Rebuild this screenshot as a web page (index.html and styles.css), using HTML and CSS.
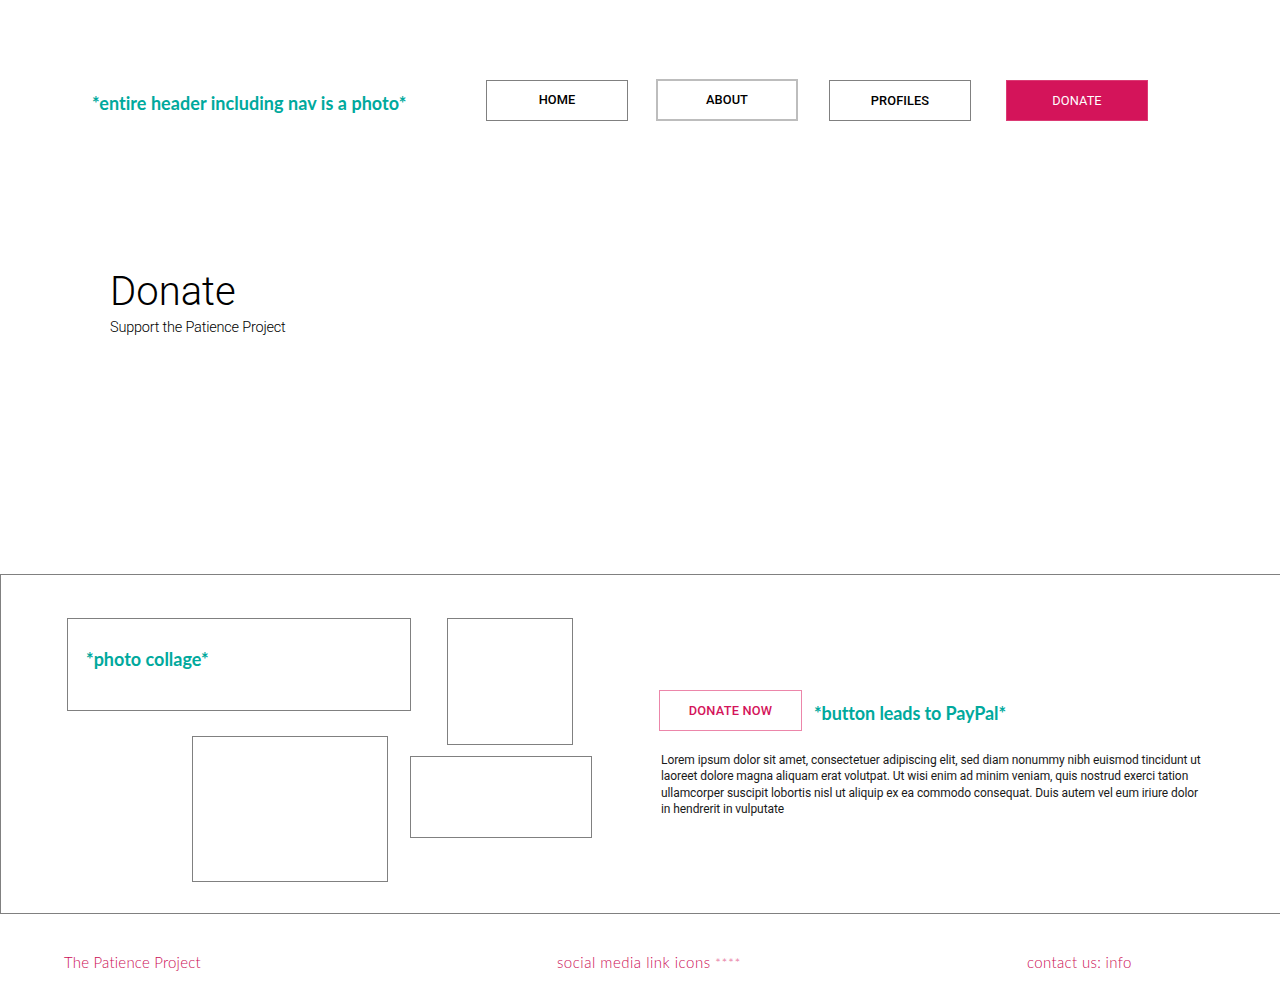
FILE: index.html
```html
<!DOCTYPE html>
<html lang="en">
<head>
<meta charset="utf-8">
<title>Donate - The Patience Project</title>
<link rel="stylesheet" href="styles.css">
</head>
<body>
<header class="top">
  <div class="topbar">
    <p class="note note-header">*entire header including nav is a photo*</p>
    <nav class="nav">
      <a class="nav-btn" href="#">HOME</a>
      <a class="nav-btn nav-btn-light" href="#">ABOUT</a>
      <a class="nav-btn nav-btn-wide" href="#">PROFILES</a>
      <a class="nav-btn nav-btn-active" href="#">DONATE</a>
    </nav>
  </div>
  <div class="hero">
    <h1 class="hero-title">Donate</h1>
    <p class="hero-sub">Support the Patience Project</p>
  </div>
</header>
<section class="donate">
  <div class="collage">
    <div class="ph ph-1"><span class="note note-collage">*photo collage*</span></div>
    <div class="ph ph-2"></div>
    <div class="ph ph-3"></div>
    <div class="ph ph-4"></div>
  </div>
  <div class="donate-info">
    <div class="btn-row">
      <a class="donate-now" href="#">DONATE NOW</a>
      <span class="note note-paypal">*button leads to PayPal*</span>
    </div>
    <p class="lorem">Lorem ipsum dolor sit amet, consectetuer adipiscing elit, sed diam nonummy nibh euismod tincidunt ut laoreet dolore magna aliquam erat volutpat. Ut wisi enim ad minim veniam, quis nostrud exerci tation ullamcorper suscipit lobortis nisl ut aliquip ex ea commodo consequat. Duis autem vel eum iriure dolor in hendrerit in vulputate</p>
  </div>
</section>
<footer class="foot">
  <span>The Patience Project</span>
  <span class="foot-mid">social media link icons <span class="stars">****</span></span>
  <span class="foot-right">contact us: info</span>
</footer>
</body>
</html>
```

FILE: styles.css
```css
* { box-sizing: border-box; }
html, body { margin: 0; padding: 0; background: #fff; }
body { font-family: Roboto, "Liberation Sans", sans-serif; color: #000; overflow-x: hidden; }
p { margin: 0; }

.note {
  font-family: Lato, "Open Sans", sans-serif;
  font-weight: 700;
  color: #00a99d;
  font-size: 18px;
  letter-spacing: 0;
}

.top { height: 574px; }
.topbar {
  display: flex;
  align-items: center;
  padding-top: 80px;
}
.note-header {
  width: 486px;
  padding-left: 92px;
  margin-top: 5px;
  letter-spacing: 0.05px;
}
.nav { display: flex; }
.nav-btn {
  display: flex;
  align-items: center;
  justify-content: center;
  width: 142px;
  height: 41px;
  margin-right: 28px;
  padding-bottom: 2px;
  border: 1px solid #808080;
  color: #000;
  text-decoration: none;
  font-family: Roboto, sans-serif;
  font-weight: 500;
  font-size: 12.8px;
  letter-spacing: 0.1px;
}
.nav-btn-light { border: 2px solid #bdbdbd; margin-right: 31px; height: 42px; margin-top: -1px; padding-bottom: 1px; }
.nav-btn-wide { margin-right: 35px; padding-bottom: 0; }
.nav-btn-active {
  background: #d4145a;
  border-color: #dc3a74;
  color: #fff;
  font-weight: 400;
  padding-bottom: 0;
}

.hero { padding: 147px 0 0 110px; }
.hero-title {
  margin: 0;
  font-weight: 300;
  font-size: 40px;
  line-height: 48px;
}
.hero-sub {
  margin-top: 3px;
  font-weight: 300;
  font-size: 14.5px;
  line-height: 18px;
  letter-spacing: -0.2px;
}

.donate {
  display: flex;
  border-top: 1px solid #808080;
  border-bottom: 1px solid #808080;
  border-left: 1px solid #808080;
  padding: 43px 0 31px 66px;
}
.collage {
  display: grid;
  grid-template-columns: 125px 196px 22px 37px 126px 19px;
  grid-template-rows: 93px 25px 9px 11px 82px 44px;
  flex: none;
}
.ph { border: 1px solid #808080; }
.ph-1 { grid-column: 1 / 4; grid-row: 1 / 2; margin-right: -1px; padding: 29px 0 0 18px; }
.ph-2 { grid-column: 5 / 6; grid-row: 1 / 4; }
.ph-3 { grid-column: 2 / 3; grid-row: 3 / 7; }
.ph-4 { grid-column: 4 / 7; grid-row: 5 / 6; }
.note-collage { display: block; }

.donate-info { margin-left: 67px; padding-top: 72px; }
.btn-row { display: flex; align-items: center; }
.donate-now {
  display: flex;
  align-items: center;
  justify-content: center;
  width: 143px;
  height: 41px;
  border: 1px solid #ec86aa;
  color: #d4145a;
  text-decoration: none;
  font-family: Roboto, sans-serif;
  font-weight: 500;
  font-size: 12.8px;
  letter-spacing: 0.2px;
}
.note-paypal { margin-left: 12px; margin-top: 4px; letter-spacing: -0.1px; }
.lorem {
  margin: 21px 0 0 2px;
  width: 545px;
  font-size: 12px;
  line-height: 16.3px;
  letter-spacing: -0.08px;
  color: #1a1a1a;
}

.foot {
  display: grid;
  grid-template-columns: 493px 470px auto;
  padding: 38px 0 0 64px;
  font-family: Lato, sans-serif;
  font-weight: 300;
  font-size: 15px;
  line-height: 20px;
  letter-spacing: 0.2px;
  color: #cc0e55;
}
.foot-mid { letter-spacing: 0.5px; }
.foot-right { letter-spacing: 0.35px; }
.stars { font-size: 14px; letter-spacing: 0.5px; color: #e56a96; }
```
